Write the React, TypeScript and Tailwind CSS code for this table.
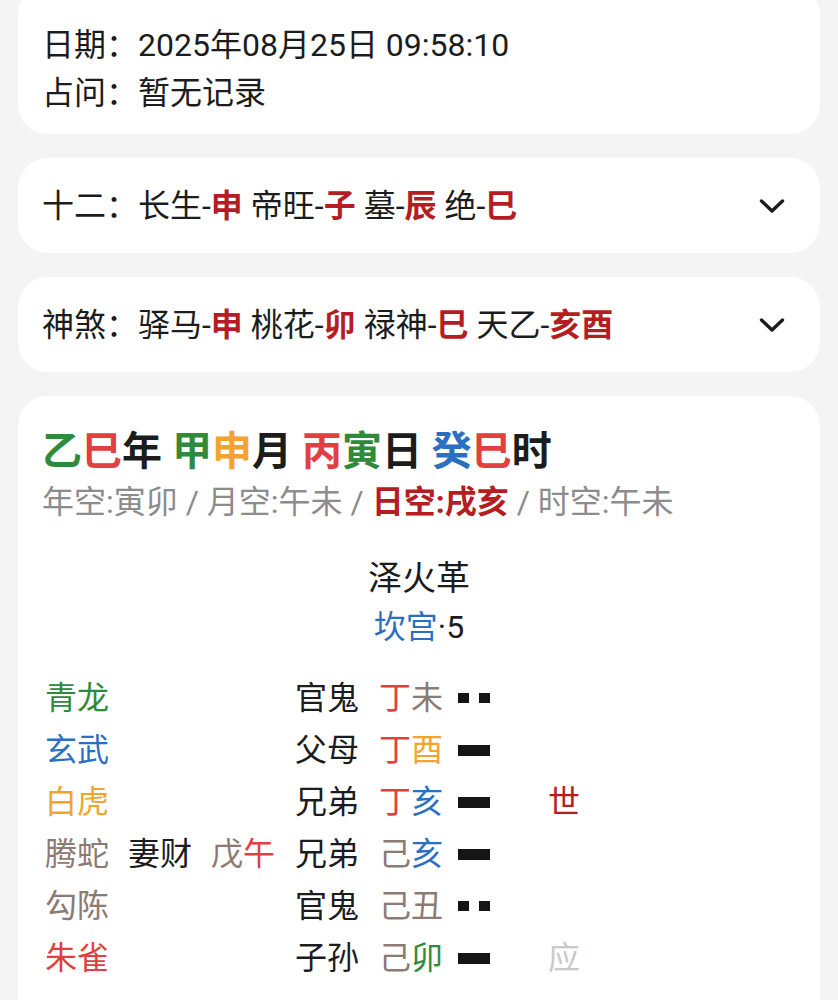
import React from "react";

const C = {
  green: "text-[#2f8a3c]",
  red: "text-[#e2403f]",
  orange: "text-[#f2a52d]",
  blue: "text-[#2b6fc1]",
  brown: "text-[#8c7a73]",
  dark: "text-[#1c1c1c]",
  crimson: "text-[#b41d22]",
  pale: "text-[#c9c9c9]",
};

type Piece = { t: string; c: string };

interface Row {
  god: Piece;
  hidden?: Piece[];
  kin: string;
  gz: Piece[];
  yang: boolean;
  mark?: Piece;
}

const rows: Row[] = [
  {
    god: { t: "青龙", c: C.green },
    kin: "官鬼",
    gz: [
      { t: "丁", c: C.red },
      { t: "未", c: C.brown },
    ],
    yang: false,
  },
  {
    god: { t: "玄武", c: C.blue },
    kin: "父母",
    gz: [
      { t: "丁", c: C.red },
      { t: "酉", c: C.orange },
    ],
    yang: true,
  },
  {
    god: { t: "白虎", c: C.orange },
    kin: "兄弟",
    gz: [
      { t: "丁", c: C.red },
      { t: "亥", c: C.blue },
    ],
    yang: true,
    mark: { t: "世", c: C.crimson },
  },
  {
    god: { t: "腾蛇", c: C.brown },
    hidden: [
      { t: "妻财", c: C.dark },
      { t: "戊", c: C.brown },
      { t: "午", c: C.red },
    ],
    kin: "兄弟",
    gz: [
      { t: "己", c: C.brown },
      { t: "亥", c: C.blue },
    ],
    yang: true,
  },
  {
    god: { t: "勾陈", c: C.brown },
    kin: "官鬼",
    gz: [
      { t: "己", c: C.brown },
      { t: "丑", c: C.brown },
    ],
    yang: false,
  },
  {
    god: { t: "朱雀", c: C.red },
    kin: "子孙",
    gz: [
      { t: "己", c: C.brown },
      { t: "卯", c: C.green },
    ],
    yang: true,
    mark: { t: "应", c: C.pale },
  },
];

const Chevron = () => (
  <svg width="26" height="16" viewBox="0 0 26 16" fill="none" className="shrink-0">
    <polyline
      points="2.5,3 13,13 23.5,3"
      stroke="#1c1c1c"
      strokeWidth="3.4"
      strokeLinecap="round"
      strokeLinejoin="round"
    />
  </svg>
);

// 阳爻一条, 阴爻两块
const Yao = ({ yang }: { yang: boolean }) =>
  yang ? (
    <span className="block w-[32px] h-[11px] bg-[#151515]" />
  ) : (
    <span className="flex gap-[10px]">
      <span className="block w-[11px] h-[10px] bg-[#151515]" />
      <span className="block w-[11px] h-[10px] bg-[#151515]" />
    </span>
  );

const Hl = ({ children }: { children: React.ReactNode }) => (
  <span className="font-bold text-[#b41d22]">{children}</span>
);

export default function App() {
  return (
    <div
      className="min-h-screen bg-[#f4f4f4] px-[18px] flex flex-col gap-[24px] text-[32px] text-[#1c1c1c] overflow-hidden"
      style={{ fontFamily: '"Roboto", "Noto Sans CJK SC", sans-serif' }}
    >
      {/* 日期 / 占问 */}
      <div className="-mt-[15px] bg-white rounded-[30px] pl-[24px] pr-[24px] pt-[36px] pb-[17px] leading-[48px]">
        <div>日期：2025年08月25日 09:58:10</div>
        <div>占问：暂无记录</div>
      </div>

      {/* 十二长生 */}
      <div className="bg-white rounded-[30px] h-[95px] pl-[24px] pr-[35px] flex items-center justify-between leading-[48px]">
        <div>
          十二：长生-<Hl>申</Hl> 帝旺-<Hl>子</Hl> 墓-<Hl>辰</Hl> 绝-<Hl>巳</Hl>
        </div>
        <Chevron />
      </div>

      {/* 神煞 */}
      <div className="bg-white rounded-[30px] h-[95px] pl-[24px] pr-[35px] flex items-center justify-between leading-[48px]">
        <div>
          神煞：驿马-<Hl>申</Hl> 桃花-<Hl>卯</Hl> 禄神-<Hl>巳</Hl> 天乙-<Hl>亥酉</Hl>
        </div>
        <Chevron />
      </div>

      {/* 卦 */}
      <div className="bg-white rounded-t-[30px] pl-[24px] pr-[24px] pt-[32px] pb-[40px]">
        <div className="text-[40px] font-bold leading-[48px]">
          <span className={C.green}>乙</span>
          <span className={C.red}>巳</span>年{" "}
          <span className={C.green}>甲</span>
          <span className={C.orange}>申</span>月{" "}
          <span className={C.red}>丙</span>
          <span className={C.green}>寅</span>日{" "}
          <span className={C.blue}>癸</span>
          <span className={C.red}>巳</span>时
        </div>
        <div className="mt-[2px] leading-[48px] text-[#8c8c8c]">
          年空:寅卯 / 月空:午未 / <span className="font-bold text-[#b41d22]">日空:戌亥</span> / 时空:午未
        </div>

        <div className="mt-[28px] text-center text-[34px] leading-[48px]">泽火革</div>
        <div className="mt-[1px] text-center leading-[48px]">
          <span className="text-[#2b6fc1]">坎宫</span>·5
        </div>

        <div className="mt-[21px] pl-[3px] flex flex-col">
          {rows.map((r, i) => (
            <div key={i} className="flex items-center h-[52px] leading-[52px]">
              <span className={`w-[83px] shrink-0 ${r.god.c}`}>{r.god.t}</span>
              <span className="w-[167px] shrink-0 whitespace-nowrap">
                {r.hidden && (
                  <>
                    <span className={r.hidden[0].c}>{r.hidden[0].t}</span>
                    <span className="inline-block w-[19px]" />
                    <span className={r.hidden[1].c}>{r.hidden[1].t}</span>
                    <span className={r.hidden[2].c}>{r.hidden[2].t}</span>
                  </>
                )}
              </span>
              <span className="w-[84px] shrink-0">{r.kin}</span>
              <span className="w-[79px] shrink-0">
                {r.gz.map((g, j) => (
                  <span key={j} className={g.c}>
                    {g.t}
                  </span>
                ))}
              </span>
              <span className="w-[90px] shrink-0 flex items-center">
                <Yao yang={r.yang} />
              </span>
              {r.mark && <span className={r.mark.c}>{r.mark.t}</span>}
            </div>
          ))}
        </div>
      </div>
    </div>
  );
}
